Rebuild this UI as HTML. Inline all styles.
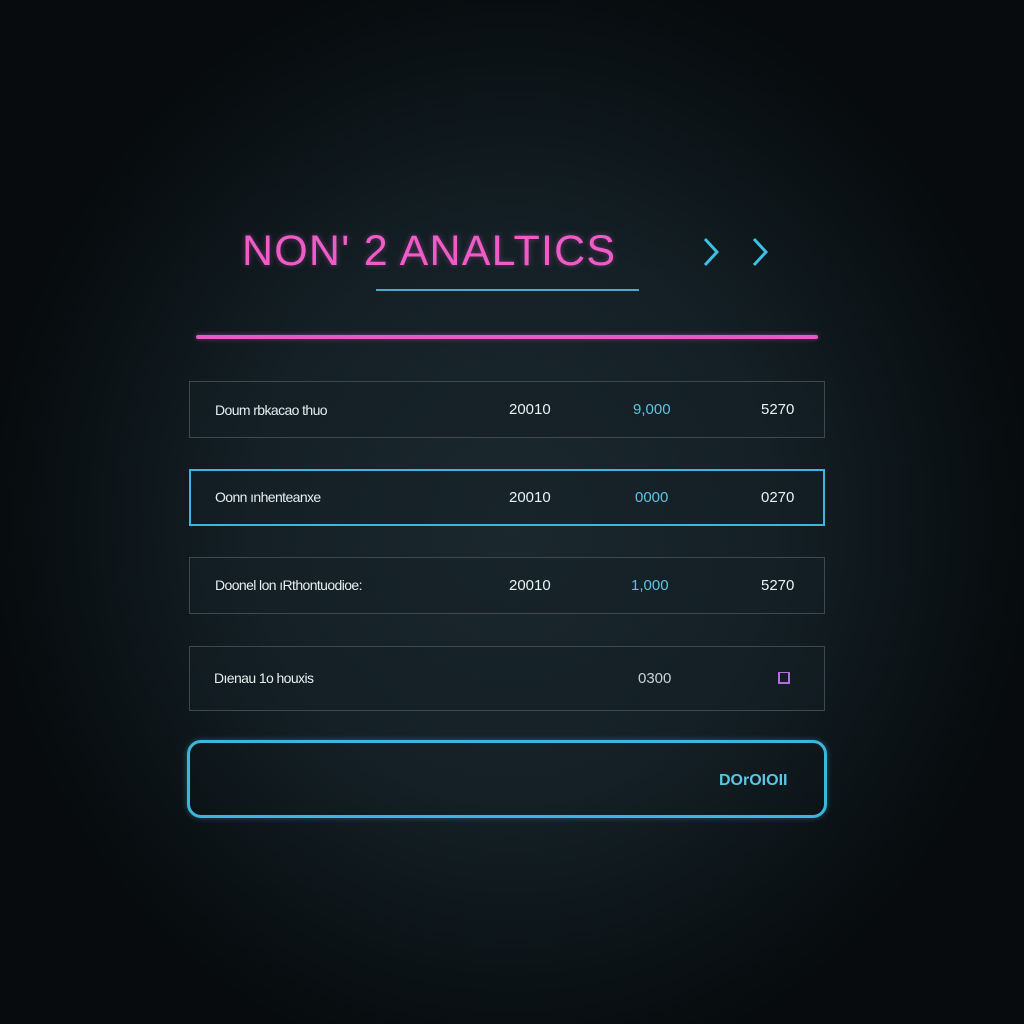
<!DOCTYPE html>
<html><head><meta charset="utf-8"><style>
html,body{margin:0;width:1024px;height:1024px;overflow:hidden}
body{background:radial-gradient(ellipse 520px 560px at 512px 520px,#1b282e 0%,#142026 50%,#0a1114 85%,#070b0d 100%);font-family:"Liberation Sans",sans-serif;position:relative}
.a{position:absolute}
.row{position:absolute;left:189px;width:636px;border:1px solid #3a4a50;box-sizing:border-box;background:rgba(20,32,38,0.5)}
.t{position:absolute;font-size:14px;color:#e6eef0;letter-spacing:-0.6px}
.n{position:absolute;font-size:15px;color:#e8f2f4}
.c{color:#5cc4e2}
</style></head><body>
<div class="a" style="left:242px;top:227px;font-size:43px;color:#ee5cc8;letter-spacing:1.2px;text-shadow:0 0 6px rgba(238,92,200,.4)">NON' 2 ANALTICS</div>
<svg class="a" style="left:700px;top:236px" width="75" height="32" viewBox="0 0 75 32"><path d="M5 3 L17 16 L5 29" stroke="#3cc0e4" stroke-width="3" fill="none"/><path d="M54 3 L66 16 L54 29" stroke="#3cc0e4" stroke-width="3" fill="none"/></svg>
<div class="a" style="left:376px;top:289px;width:263px;height:2px;background:#4aaccc"></div>
<div class="a" style="left:196px;top:335px;width:622px;height:4px;background:#e25cc8;border-radius:2px;box-shadow:0 0 5px rgba(226,92,200,.5)"></div>

<div class="row" style="top:381px;height:57px"><span class="t" style="left:25px;top:20px">Doum rbkacao thuo</span><span class="n" style="left:319px;top:19px">20010</span><span class="n c" style="left:443px;top:19px">9,000</span><span class="n" style="left:571px;top:19px">5270</span></div>
<div class="row" style="top:469px;height:57px;border:2px solid #3cb6dc"><span class="t" style="left:24px;top:18px">Oonn ınhenteanxe</span><span class="n" style="left:318px;top:18px">20010</span><span class="n c" style="left:444px;top:18px">0000</span><span class="n" style="left:570px;top:18px">0270</span></div>
<div class="row" style="top:557px;height:57px"><span class="t" style="left:25px;top:19px">Doonel lon ıRthontuodioe:</span><span class="n" style="left:319px;top:19px">20010</span><span class="n c" style="left:441px;top:19px">1,000</span><span class="n" style="left:571px;top:19px">5270</span></div>
<div class="row" style="top:646px;height:65px"><span class="t" style="left:24px;top:23px">Dıenau 1o houxis</span><span class="n" style="left:448px;top:23px;color:#c8d2d6">0300</span><div class="a" style="left:588px;top:25px;width:8px;height:9px;border:2px solid #b070e0;border-top-width:1px"></div></div>
<div class="a" style="left:187px;top:740px;width:640px;height:78px;box-sizing:border-box;border:3px solid #3cb6dc;border-radius:14px;box-shadow:0 0 6px rgba(60,182,220,.4)"></div>
<div class="a" style="left:719px;top:772px;font-size:16px;color:#5cc4e2;font-weight:bold">DOrOIOII</div>
</body></html>
